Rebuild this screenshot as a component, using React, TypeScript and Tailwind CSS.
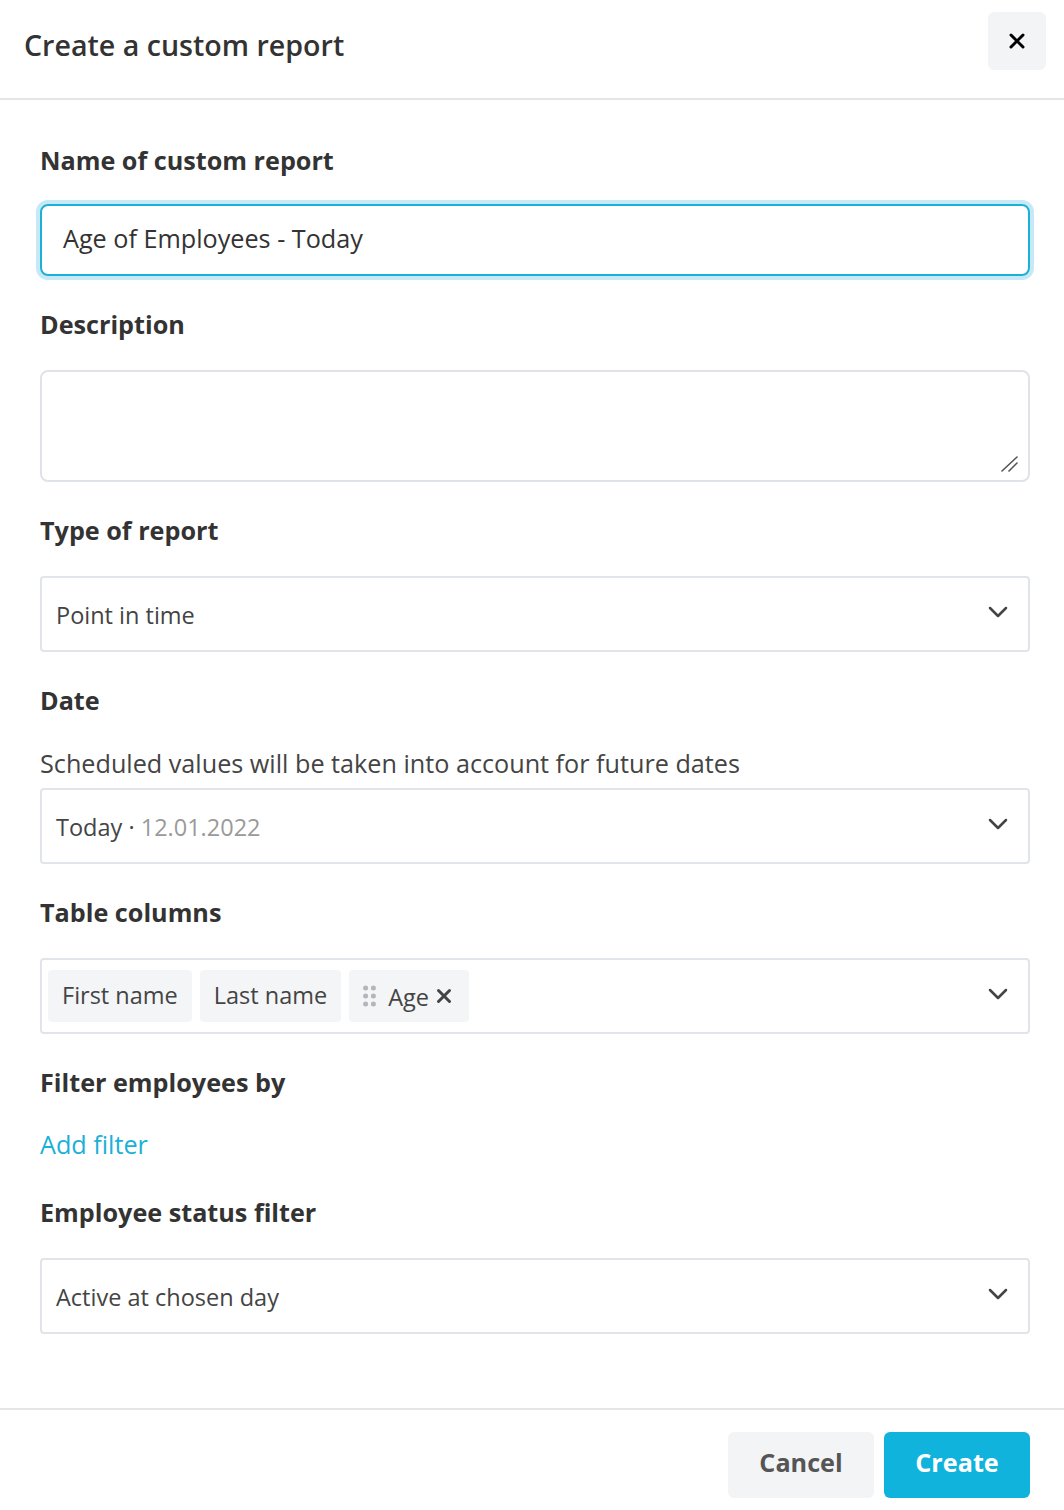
import { ChevronDown, X } from 'lucide-react';

const font = { fontFamily: '"Open Sans", "Noto Sans", sans-serif' };

function Label({ children, className = '' }: { children: React.ReactNode; className?: string }) {
    return <div className={`text-[25.2px] leading-[32px] font-bold text-[#333] ${className}`}>{children}</div>;
}

function SelectBox({ children }: { children: React.ReactNode }) {
    return (
        <div className="h-[76px] border-2 border-[#e1e5ea] rounded-[4px] flex items-center pl-[14px] pr-[14px] bg-white">
            <div className="flex-1 text-[23.5px] text-[#444] pt-[3px]">{children}</div>
            <ChevronDown size={32} strokeWidth={1.9} className="text-[#444] -mt-[4px]" />
        </div>
    );
}

function Tag({ children }: { children: React.ReactNode }) {
    return (
        <div className="h-[52px] px-[14px] rounded-[4px] bg-[#f4f5f7] flex items-center text-[23.5px] text-[#444]">
            {children}
        </div>
    );
}

function DragDots() {
    return (
        <svg width="13" height="22" viewBox="0 0 13 22" className="mr-[12px]">
            {[3, 11, 19].map((y) => (
                <g key={y} fill="#b3b6ba">
                    <circle cx="2.6" cy={y} r="2.5" />
                    <circle cx="10.4" cy={y} r="2.5" />
                </g>
            ))}
        </svg>
    );
}

export default function App() {
    return (
        <div style={font} className="w-[1064px] h-[1510px] bg-white flex flex-col text-[#333]">
            {/* header */}
            <div className="h-[100px] border-b-2 border-[#e6e6e6] flex items-center justify-between pl-[24px] pr-[18px] shrink-0">
                <h1 className="text-[28.6px] font-semibold text-[#333] -mt-[8px]">Create a custom report</h1>
                <button className="w-[58px] h-[58px] rounded-[6px] bg-[#f3f4f6] flex items-center justify-center -mt-[16px]">
                    <X size={24} strokeWidth={3} className="text-black" />
                </button>
            </div>

            {/* body */}
            <div className="flex-1 pl-[40px] pr-[34px] pt-[44px]">
                <Label>Name of custom report</Label>
                <div className="mt-[28px] h-[72px] border-2 border-[#1ab0d8] rounded-[8px] ring-4 ring-[#c6e9f5] flex items-center px-[21px] text-[25.2px] text-[#333] pb-[2px]">
                    Age of Employees - Today
                </div>

                <Label className="mt-[32px]">Description</Label>
                <div className="relative mt-[30px]">
                    <textarea
                        className="block w-full h-[112px] border-2 border-[#dfe3e8] rounded-[8px] resize-none outline-none px-[21px] py-[14px] text-[24px]"
                        style={font}
                    />
                    {/* resize grip */}
                    <svg width="20" height="20" viewBox="0 0 20 20" className="absolute right-[10px] bottom-[9px]">
                        <path d="M2 18 L17 4" stroke="#555" strokeWidth="1.6" strokeLinecap="round" />
                        <path d="M9 18 L17 10" stroke="#555" strokeWidth="1.6" strokeLinecap="round" />
                    </svg>
                </div>

                <Label className="mt-[32px]">Type of report</Label>
                <div className="mt-[30px]">
                    <SelectBox>Point in time</SelectBox>
                </div>

                <Label className="mt-[32px]">Date</Label>
                <div className="mt-[31px] text-[25.2px] leading-[32px] text-[#444]">
                    Scheduled values will be taken into account for future dates
                </div>
                <div className="mt-[9px]">
                    <SelectBox>
                        Today <span className="text-[#444]">·</span> <span className="text-[#9a9a9a]">12.01.2022</span>
                    </SelectBox>
                </div>

                <Label className="mt-[32px]">Table columns</Label>
                <div className="mt-[30px] h-[76px] border-2 border-[#e1e5ea] rounded-[4px] flex items-center pl-[6px] pr-[14px]">
                    <div className="flex-1 flex items-center gap-[8px]">
                        <Tag>First name</Tag>
                        <Tag>Last name</Tag>
                        <Tag>
                            <DragDots />
                            <span className="mt-[4px]">Age</span>
                            <X size={22} strokeWidth={3.2} className="ml-[4px] text-[#444]" />
                        </Tag>
                    </div>
                    <ChevronDown size={32} strokeWidth={1.9} className="text-[#444] -mt-[4px]" />
                </div>

                <Label className="mt-[32px]">Filter employees by</Label>
                <div className="mt-[30px] text-[25.2px] leading-[32px] text-[#1ab0d8]">Add filter</div>

                <Label className="mt-[36px]">Employee status filter</Label>
                <div className="mt-[30px]">
                    <SelectBox>Active at chosen day</SelectBox>
                </div>
            </div>

            {/* footer */}
            <div className="h-[102px] border-t-2 border-[#e6e6e6] flex items-start justify-end gap-[10px] pr-[34px] pt-[22px] shrink-0">
                <button className="w-[146px] h-[66px] rounded-[6px] bg-[#f3f4f6] text-[25.2px] font-bold text-[#555] pb-[4px]">Cancel</button>
                <button className="w-[146px] h-[66px] rounded-[6px] bg-[#10b3dc] text-[25.2px] font-bold text-white pb-[4px]">Create</button>
            </div>
        </div>
    );
}
